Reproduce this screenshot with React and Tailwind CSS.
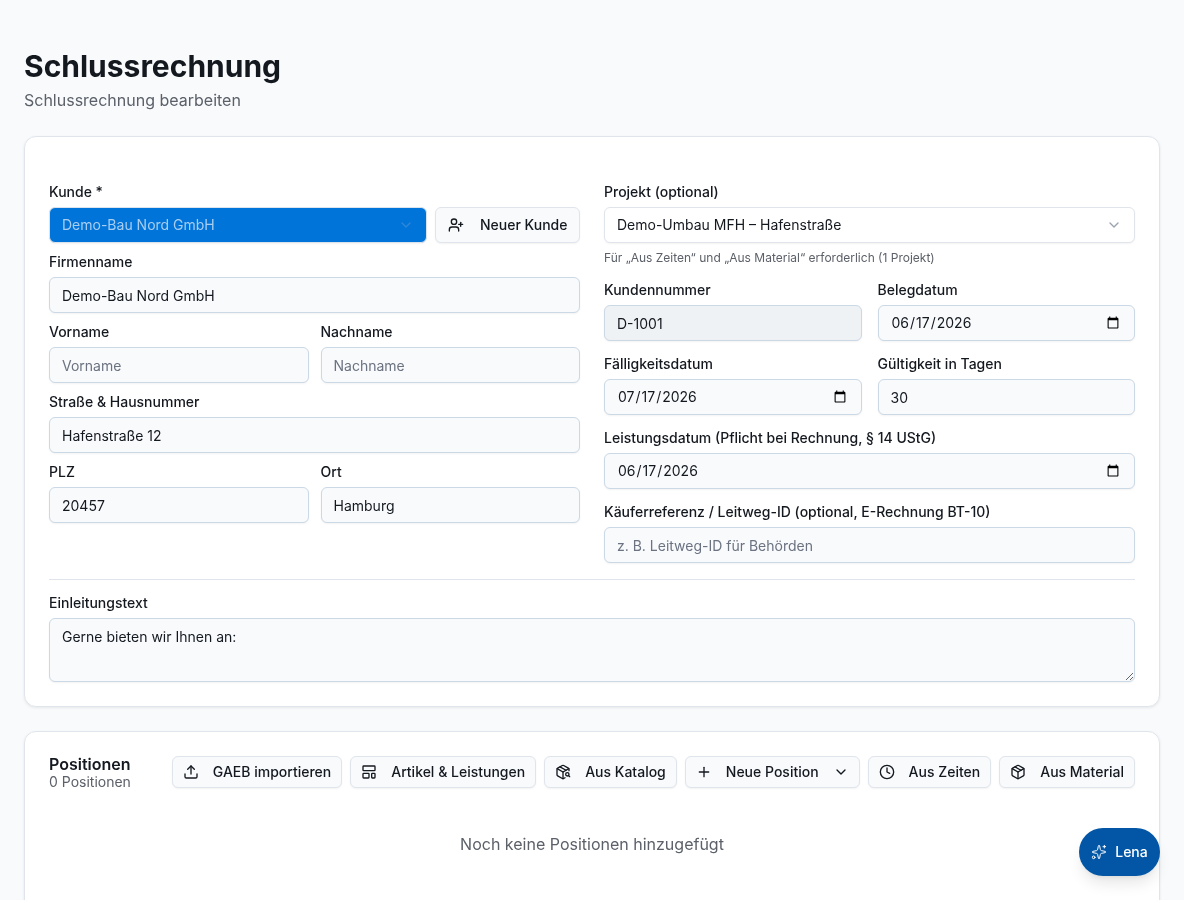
import React from "react";
import { UserPlus, ChevronDown, Upload, LayoutTemplate, PackageSearch, Plus, Clock, Package, Sparkles } from "lucide-react";

const font = "font-['Inter',sans-serif] antialiased";
const inputBase = "block w-full h-9 rounded-md border border-[#cbd8e6] px-3 text-sm text-[#14181f] placeholder:text-[#6b7280] shadow-[0_1px_2px_rgba(0,0,0,0.05)] outline-none";
const inputCls = `${inputBase} bg-[#f8fafc]`;

function Label({ children }) {
  return <label className="block h-5 text-sm leading-5 font-medium text-[#14181f]">{children}</label>;
}

function Field({ label, className = "", children }) {
  return (
    <div className={`flex flex-col gap-[5px] ${className}`}>
      <Label>{label}</Label>
      {children}
    </div>
  );
}

function TextField({ label, value, placeholder, className }) {
  return (
    <Field label={label} className={className}>
      <input className={inputCls} defaultValue={value} placeholder={placeholder} />
    </Field>
  );
}

function DateField({ label, value, className }) {
  return (
    <Field label={label} className={className}>
      <input type="date" className={inputCls} defaultValue={value} />
    </Field>
  );
}

function ActionButton({ icon: Icon, children, trailing }) {
  return (
    <button className="flex h-8 items-center gap-[10px] rounded-md border border-[#e0e5ec] bg-[#f8fafc] px-[10px] text-sm font-medium text-[#14181f] shadow-[0_1px_2px_rgba(0,0,0,0.05)] whitespace-nowrap">
      <Icon size={16} strokeWidth={2} className="mr-1" />
      <span>{children}</span>
      {trailing}
    </button>
  );
}

export default function App() {
  return (
    <div className={`${font} h-[900px] overflow-hidden bg-[#f8fafc] text-[#14181f]`}>
      <div className="will-change-transform px-6 pt-[48px]">
        <h1 className="text-[30px] leading-9 font-bold text-[#14181f]">Schlussrechnung</h1>
        <p className="mt-[6px] text-base leading-5 text-[#5c6068]">Schlussrechnung bearbeiten</p>

        <section className="mt-[26px] rounded-xl border border-[#e0e5ec] bg-white px-6 pt-[45px] pb-6 shadow-[0_1px_3px_rgba(0,0,0,0.08)]">
          <div className="grid grid-cols-2 gap-6">
            <div className="flex flex-col gap-[9px]">
              <div className="flex flex-col gap-[5px]">
                <Label>Kunde *</Label>
                <div className="flex gap-2">
                  <button className="flex h-9 min-w-0 flex-1 items-center justify-between rounded-md border border-[#dbe3ec] bg-[#0074d9] pl-3 pr-3 text-sm text-[#a8cdef] shadow-[0_1px_2px_rgba(0,0,0,0.05)]">
                    <span>Demo-Bau Nord GmbH</span>
                    <ChevronDown size={16} className="text-[#2f87da]" />
                  </button>
                  <button className="flex h-9 w-[145px] shrink-0 items-center gap-4 rounded-md border border-[#e0e5ec] bg-[#f8fafc] pl-[12px] text-sm font-medium text-[#14181f] shadow-[0_1px_2px_rgba(0,0,0,0.05)]">
                    <UserPlus size={16} />
                    <span>Neuer Kunde</span>
                  </button>
                </div>
              </div>
              <TextField label="Firmenname" value="Demo-Bau Nord GmbH" />
              <div className="grid grid-cols-2 gap-3">
                <TextField label="Vorname" placeholder="Vorname" />
                <TextField label="Nachname" placeholder="Nachname" />
              </div>
              <TextField label="Straße & Hausnummer" value="Hafenstraße 12" />
              <div className="grid grid-cols-2 gap-3">
                <TextField label="PLZ" value="20457" />
                <TextField label="Ort" value="Hamburg" />
              </div>
            </div>

            <div className="flex flex-col">
              <Label>Projekt (optional)</Label>
              <button className="mt-[5px] flex h-9 items-center justify-between rounded-md border border-[#e0e5ec] bg-white pl-3 pr-3 text-sm text-[#14181f] shadow-[0_1px_2px_rgba(0,0,0,0.05)]">
                <span>Demo-Umbau MFH – Hafenstraße</span>
                <ChevronDown size={16} className="text-[#9aa3af]" />
              </button>
              <p className="mt-[7px] text-xs leading-4 text-[#5c6068]">Für „Aus Zeiten“ und „Aus Material“ erforderlich (1 Projekt)</p>
              <div className="mt-[14px] grid grid-cols-2 gap-x-4 gap-y-[13px]">
                <Field label="Kundennummer">
                  <input className={`${inputBase} bg-[#eff2f5]`} defaultValue="D-1001" readOnly />
                </Field>
                <DateField label="Belegdatum" value="2026-06-17" />
                <DateField label="Fälligkeitsdatum" value="2026-07-17" />
                <TextField label="Gültigkeit in Tagen" value="30" />
                <DateField label="Leistungsdatum (Pflicht bei Rechnung, § 14 UStG)" value="2026-06-17" className="col-span-2" />
                <TextField label="Käuferreferenz / Leitweg-ID (optional, E-Rechnung BT-10)" placeholder="z. B. Leitweg-ID für Behörden" className="col-span-2" />
              </div>
            </div>
          </div>

          <div className="mt-4 border-t border-[#e0e5ec] pt-[13px]">
            <Field label="Einleitungstext">
              <textarea className="block h-16 w-full rounded-md border border-[#cbd8e6] bg-[#f8fafc] px-3 py-2 text-sm leading-5 text-[#14181f] shadow-[0_1px_2px_rgba(0,0,0,0.05)] outline-none" defaultValue="Gerne bieten wir Ihnen an:" />
            </Field>
          </div>
        </section>

        <section className="mt-6 h-[300px] rounded-xl border border-[#e0e5ec] bg-white px-6 pt-[23px] shadow-[0_1px_3px_rgba(0,0,0,0.08)]">
          <div className="flex items-center justify-between">
            <div>
              <h2 className="text-base leading-[18px] font-semibold text-[#14181f]">Positionen</h2>
              <p className="text-sm leading-[18px] text-[#5c6068]">0 Positionen</p>
            </div>
            <div className="mb-[2px] flex gap-2">
              <ActionButton icon={Upload}>GAEB importieren</ActionButton>
              <ActionButton icon={LayoutTemplate}>Artikel & Leistungen</ActionButton>
              <ActionButton icon={PackageSearch}>Aus Katalog</ActionButton>
              <ActionButton icon={Plus} trailing={<ChevronDown size={16} className="ml-1" />}>Neue Position</ActionButton>
              <ActionButton icon={Clock}>Aus Zeiten</ActionButton>
              <ActionButton icon={Package}>Aus Material</ActionButton>
            </div>
          </div>
          <p className="mt-[41px] text-center text-base leading-6 text-[#5c6068]">Noch keine Positionen hinzugefügt</p>
        </section>
      </div>

      <button className="fixed right-6 bottom-6 flex h-12 w-[81px] items-center justify-center gap-2 rounded-full bg-[#0256a5] text-sm font-medium text-white shadow-[0_10px_15px_-3px_rgba(0,0,0,0.1),0_4px_6px_-4px_rgba(0,0,0,0.1)] will-change-transform">
        <Sparkles size={16} strokeWidth={1.5} />
        <span>Lena</span>
      </button>
    </div>
  );
}
